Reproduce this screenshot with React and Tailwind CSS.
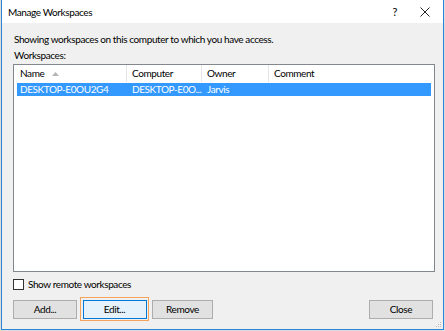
import React from "react";

function Btn({ children, className = "" }) {
  return (
    <div
      className={`h-[19px] flex items-center justify-center border border-[#adadad] bg-[#e1e1e1] text-black ${className}`}
    >
      {children}
    </div>
  );
}

export default function App() {
  return (
    <div className="w-[445px] h-[331px] bg-[#dcdcdc] overflow-hidden flex text-[10px] tracking-[-0.4px] text-black font-['Lato',sans-serif]">
      <div className="ml-[1px] w-[443px] h-[330px] border-l border-r border-b border-[#2b86d8] bg-[#f0f0f0] flex flex-col">
        {/* title bar */}
        <div className="h-[23px] bg-white flex items-center shrink-0">
          <span className="ml-[6px] leading-none">Manage Workspaces</span>
          <span className="ml-auto mr-[23px] text-[11px] leading-none">?</span>
          <svg width="10" height="10" viewBox="0 0 10 10" className="mr-[13px]">
            <path d="M0.5 0.5 L9.5 9.5 M9.5 0.5 L0.5 9.5" stroke="#222" strokeWidth="1" />
          </svg>
        </div>
        {/* content */}
        <div className="flex-1 flex flex-col pl-[11px] pr-[10px] relative">
          <div className="mt-[9px] h-[14px] leading-[14px] ml-[1px]">
            Showing workspaces on this computer to which you have access.
          </div>
          <div className="mt-[2px] h-[14px] leading-[14px] ml-[1px]">Workspaces:</div>
          <div className="mt-[2px] h-[208px] w-[422px] border border-[#828790] bg-white flex flex-col">
            <div className="h-[18px] flex items-center border-b border-white">
              <div className="w-[113px] h-full flex items-center border-r border-[#e5e5e5] pl-[6px]">
                <span>Name</span>
                <svg width="7" height="4" viewBox="0 0 7 4" className="ml-[8px]">
                  <path d="M0 4 L3.5 0 L7 4 Z" fill="#b5b5b5" />
                </svg>
              </div>
              <div className="w-[75px] h-full flex items-center border-r border-[#e5e5e5] pl-[5px]">Computer</div>
              <div className="w-[67px] h-full flex items-center border-r border-[#e5e5e5] pl-[5px]">Owner</div>
              <div className="flex-1 h-full flex items-center pl-[5px]">Comment</div>
            </div>
            <div className="ml-[3px] mr-[3px] h-[13px] bg-[#3399ff] text-white flex items-center whitespace-nowrap">
              <div className="w-[110px] pl-[3px]">DESKTOP-E0OU2G4</div>
              <div className="w-[75px] pl-[5px]">DESKTOP-E0O...</div>
              <div className="w-[67px] pl-[5px]">Jarvis</div>
            </div>
          </div>
          <div className="mt-[7px] flex items-center h-[11px]">
            <div className="w-[11px] h-[11px] border border-[#333] bg-white" />
            <span className="ml-[4px]">Show remote workspaces</span>
          </div>
          <div className="mt-[7px] flex items-center">
            <Btn className="w-[64px]">Add...</Btn>
            <div className="ml-[3px] w-[69px] h-[24px] border border-[#f5a25a] flex items-center justify-center">
              <div className="w-[64px] h-[19px] border border-[#0078d7] bg-[#e5f1fb] flex items-center justify-center">
                Edit...
              </div>
            </div>
            <Btn className="ml-[3px] w-[61px]">Remove</Btn>
            <Btn className="ml-auto w-[64px]">Close</Btn>
          </div>
          <svg width="6" height="6" viewBox="0 0 6 6" className="absolute right-[1px] bottom-[1px]">
            <rect x="4" y="0" width="1" height="1" fill="#bbb" />
            <rect x="2" y="2" width="1" height="1" fill="#bbb" />
            <rect x="4" y="2" width="1" height="1" fill="#bbb" />
            <rect x="0" y="4" width="1" height="1" fill="#bbb" />
            <rect x="2" y="4" width="1" height="1" fill="#bbb" />
            <rect x="4" y="4" width="1" height="1" fill="#bbb" />
          </svg>
        </div>
      </div>
    </div>
  );
}
